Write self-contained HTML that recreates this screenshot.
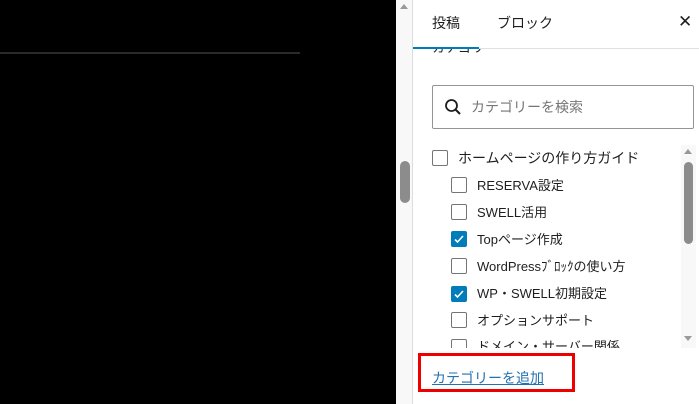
<!DOCTYPE html>
<html><head><meta charset="utf-8"><style>
*{margin:0;padding:0;box-sizing:border-box}
body{width:699px;height:404px;overflow:hidden;background:#000;position:relative;font-family:"Liberation Sans","Noto Sans CJK JP",sans-serif;color:#1e1e1e}
.a{position:absolute}
.t{font-size:13px;white-space:nowrap;line-height:16px}
.cb{position:absolute;width:16px;height:16px;border:1px solid #757575;border-radius:2px;background:#fff}
.cb.on{background:#007cba;border-color:#007cba}
</style></head><body>
<div class="a" style="left:0;top:52px;width:300px;height:2px;background:#2a2a2a"></div>
<div class="a" style="left:396px;top:0;width:17px;height:404px;background:#f8f8f8;border-right:1px solid #ddd"></div>
<div class="a" style="left:400px;top:4px;width:0;height:0;border-left:4px solid transparent;border-right:4px solid transparent;border-bottom:5px solid #999"></div>
<div class="a" style="left:400px;top:161px;width:10px;height:42px;border-radius:5px;background:#8c8c8c"></div>
<div class="a" style="left:413px;top:0;width:286px;height:404px;background:#fff"></div>
<div class="a t" style="left:432px;top:15px;font-size:14px">投稿</div>
<div class="a t" style="left:497px;top:15px;font-size:14px">ブロック</div>
<div class="a t" style="left:678px;top:14px;font-size:17px">✕</div>
<div class="a" style="left:413px;top:48px;width:286px;height:1px;background:#e0e0e0"></div>
<div class="a" style="left:413px;top:47px;width:66px;height:2px;background:#007cba"></div>
<div class="a" style="left:413px;top:49px;width:286px;height:6px;overflow:hidden"><div class="t" style="position:absolute;left:19px;top:-9px">カテゴリ</div></div>
<div class="a" style="left:432px;top:85px;width:262px;height:44px;border:1px solid #949494;border-radius:2px"></div>
<svg class="a" style="left:444px;top:98px" width="18" height="18" viewBox="0 0 18 18"><circle cx="7.5" cy="7.5" r="5.5" fill="none" stroke="#1e1e1e" stroke-width="1.8"/><path d="M11.5 11.5L16 16" stroke="#1e1e1e" stroke-width="2"/></svg>
<div class="a t" style="left:471px;top:99px;color:#757575;font-size:14px">カテゴリーを検索</div>
<div class="a" style="left:413px;top:145px;width:268px;height:203px;overflow:hidden">
<div class="cb" style="left:19px;top:5px"></div><div class="a t" style="left:45px;top:5px;font-size:14px">ホームページの作り方ガイド</div>
<div class="cb" style="left:38px;top:32px"></div><div class="a t" style="left:64px;top:33px">RESERVA設定</div>
<div class="cb" style="left:38px;top:59px"></div><div class="a t" style="left:64px;top:60px">SWELL活用</div>
<div class="cb on" style="left:38px;top:86px"><svg width="14" height="14" viewBox="0 0 14 14"><path d="M3 7.5l2.5 2.5L11 4" fill="none" stroke="#fff" stroke-width="1.6"/></svg></div><div class="a t" style="left:64px;top:87px">Topページ作成</div>
<div class="cb" style="left:38px;top:113px"></div><div class="a t" style="left:64px;top:114px">WordPressﾌﾞﾛｯｸの使い方</div>
<div class="cb on" style="left:38px;top:141px"><svg width="14" height="14" viewBox="0 0 14 14"><path d="M3 7.5l2.5 2.5L11 4" fill="none" stroke="#fff" stroke-width="1.6"/></svg></div><div class="a t" style="left:64px;top:141px">WP・SWELL初期設定</div>
<div class="cb" style="left:38px;top:167px"></div><div class="a t" style="left:64px;top:168px">オプションサポート</div>
<div class="cb" style="left:38px;top:194px"></div><div class="a t" style="left:64px;top:194px">ドメイン・サーバー関係</div>
</div>
<div class="a" style="left:681px;top:145px;width:15px;height:203px;background:#f8f8f8"></div>
<div class="a" style="left:684px;top:149px;border-left:4px solid transparent;border-right:4px solid transparent;border-bottom:5px solid #999"></div>
<div class="a" style="left:684px;top:162px;width:9px;height:82px;border-radius:5px;background:#8c8c8c"></div>
<div class="a" style="left:684px;top:336px;border-left:4px solid transparent;border-right:4px solid transparent;border-top:5px solid #999"></div>
<div class="a t" style="left:432px;top:370px;color:#2271b1;text-decoration:underline;font-size:14px">カテゴリーを追加</div>
<div class="a" style="left:418px;top:353px;width:157px;height:39px;border:3px solid #e00"></div>
</body></html>
